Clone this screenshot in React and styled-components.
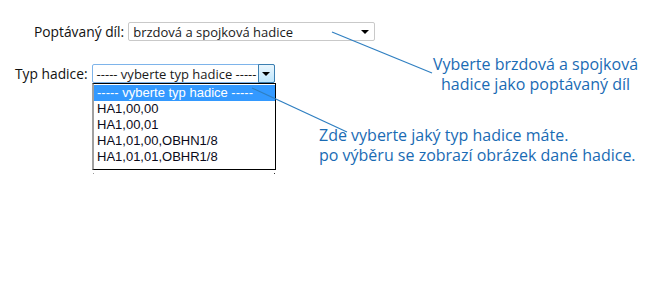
import styled, { createGlobalStyle } from "styled-components";

const GlobalStyle = createGlobalStyle`
  html, body {
    margin: 0;
    padding: 0;
    background: #ffffff;
  }
`;

const Page = styled.div`
  position: relative;
  width: 669px;
  height: 305px;
  overflow: hidden;
  font-family: "Open Sans", "Noto Sans", sans-serif;
  color: #1b1b1b;
`;

const Form = styled.div`
  display: flex;
  flex-direction: column;
  padding-top: 22px;
  gap: 23px;
`;

const Row = styled.div`
  display: flex;
  align-items: center;
  padding-left: ${p => p.indent}px;
  gap: ${p => p.gap}px;
  position: relative;
`;

const Label = styled.span`
  font-size: 13.8px;
  color: #111;
`;

const Select = styled.div`
  position: relative;
  display: flex;
  align-items: center;
  box-sizing: border-box;
  width: ${p => p.width}px;
  height: 19px;
  border: 1px solid ${p => (p.focused ? "#7eb4ea" : "#c9c9c9")};
  border-radius: 2px;
  background: #fff;
  padding-left: 4px;
  font-size: 13px;
  color: #1a1a1a;
`;

const Value = styled.span`
  flex: 1;
  white-space: nowrap;
`;

const PlainArrow = styled.span`
  width: 0;
  height: 0;
  margin-right: 5px;
  border-left: 4px solid transparent;
  border-right: 4px solid transparent;
  border-top: 4px solid #000;
`;

const ArrowButton = styled.span`
  display: flex;
  align-items: center;
  justify-content: center;
  box-sizing: border-box;
  width: 17px;
  height: 19px;
  margin: -1px -1px -1px 0;
  border: 1px solid #3c7fb1;
  border-radius: 0 2px 2px 0;
  background: linear-gradient(#eaf6fd, #bee6fd);
`;

const Triangle = styled.span`
  width: 0;
  height: 0;
  border-left: 4px solid transparent;
  border-right: 4px solid transparent;
  border-top: 4px solid #000;
  margin-top: 1px;
`;

const List = styled.ul`
  position: absolute;
  left: 92px;
  top: 19px;
  margin: 0;
  padding: 1px 0 3px;
  list-style: none;
  box-sizing: border-box;
  width: 184px;
  height: 87px;
  border: 1px solid #000;
  border-left: 2px solid #a0a0a0;
  background: #fff;
  font-family: "Liberation Sans", Arial, sans-serif;
  font-size: 13px;
  z-index: 2;
`;

const Item = styled.li`
  height: 16px;
  line-height: 16px;
  padding-left: 3px;
  white-space: nowrap;
  color: ${p => (p.active ? "#fff" : "#0a0a1a")};
  background: ${p => (p.active ? "#3399ff" : "transparent")};
`;

const Residue = styled.div`
  position: absolute;
  left: 93px;
  top: 109px;
  width: 182px;
  height: 1px;
  border-left: 1px solid #999;
  border-right: 1px solid #333;
  box-sizing: border-box;
`;

const Note = styled.div`
  position: absolute;
  left: ${p => p.x}px;
  top: ${p => p.y}px;
  font-family: "Open Sans", "Noto Sans", sans-serif;
  font-size: 16px;
  line-height: 20px;
  color: #1a6bb4;
  white-space: nowrap;
  text-align: ${p => p.align || "left"};
`;

const Leaders = styled.svg`
  position: absolute;
  left: 0;
  top: 0;
  pointer-events: none;
  z-index: 3;
`;

const items = ["HA1,00,00", "HA1,00,01", "HA1,01,00,OBHN1/8", "HA1,01,01,OBHR1/8"];

export default function App() {
  return (
    <>
      <GlobalStyle />
      <Page>
        <Form>
          <Row indent={34} gap={4}>
            <Label>Poptávaný díl:</Label>
            <Select width={247}>
              <Value>brzdová a spojková hadice</Value>
              <PlainArrow />
            </Select>
          </Row>
          <Row indent={15} gap={4}>
            <Label>Typ hadice:</Label>
            <Select width={183} focused>
              <Value>----- vyberte typ hadice -----</Value>
              <ArrowButton>
                <Triangle />
              </ArrowButton>
            </Select>
            <List>
              <Item active>----- vyberte typ hadice -----</Item>
              {items.map(t => (
                <Item key={t}>{t}</Item>
              ))}
            </List>
            <Residue />
          </Row>
        </Form>

        <Note x={433} y={54} align="center">
          Vyberte brzdová a spojková
          <br />
          hadice jako poptávaný díl
        </Note>
        <Note x={319} y={125}>
          Zde vyberte jaký typ hadice máte.
          <br />
          po výběru se zobrazí obrázek dané hadice.
        </Note>

        <Leaders width="669" height="305">
          <line x1="332" y1="32" x2="432" y2="73" stroke="#2f7fc1" strokeWidth="1.2" />
          <line x1="252" y1="88" x2="347" y2="132" stroke="#2f7fc1" strokeWidth="1.2" />
        </Leaders>
      </Page>
    </>
  );
}
